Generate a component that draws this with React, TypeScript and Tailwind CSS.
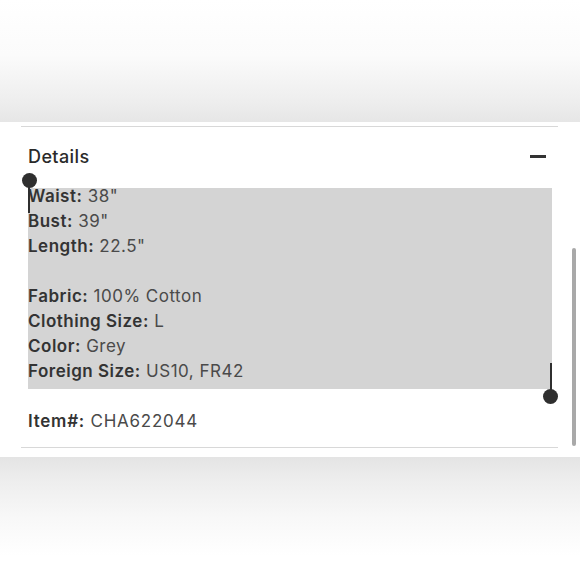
import React from "react";

const rows: ([string, string] | null)[] = [
  ["Waist:", '38"'],
  ["Bust:", '39"'],
  ["Length:", '22.5"'],
  null,
  ["Fabric:", "100% Cotton"],
  ["Clothing Size:", "L"],
  ["Color:", "Grey"],
  ["Foreign Size:", "US10, FR42"],
];

function Handle({ flip }: { flip?: boolean }) {
  return (
    <div className={`flex ${flip ? "flex-col-reverse" : "flex-col"} items-center w-[15px]`}>
      <div className="w-[15px] h-[15px] shrink-0 rounded-full bg-[#2f2f2f]" />
      <div className={`w-[2px] h-[33px] shrink-0 bg-[#2f2f2f] ${flip ? "-mb-[7.5px]" : "-mt-[7.5px]"}`} />
    </div>
  );
}

export default function App() {
  return (
    <div
      className="w-[580px] h-[580px] flex flex-col bg-white overflow-hidden"
      style={{ fontFamily: "Inter, 'Noto Sans', sans-serif" }}
    >
      <div className="h-[122px] shrink-0 bg-[linear-gradient(to_bottom,#ffffff_0%,#fbfbfb_45%,#ededed_85%,#e6e6e6_100%)]" />
      <div className="relative shrink-0 bg-white pt-[4px] pb-[9px]">
        <div className="ml-[21px] w-[537px] h-[1px] bg-[#d8d8d8]" />
        <div className="ml-[21px] w-[537px] pt-[17px] pl-[7px] pr-[12px] flex items-center justify-between">
          <span className="text-[18px] leading-[25px] font-medium tracking-[0.4px] text-[#2a2a2a]">Details</span>
          <span className="block w-[16px] h-[3px] bg-[#333333]" />
        </div>
        <div className="mt-[19px] ml-[28px] w-[524px] h-[201px] bg-[#d4d4d4] flex flex-col">
          <div className="-mt-[4px]">
            {rows.map((r, i) =>
              r ? (
                <div key={i} className="text-[17px] leading-[25px] tracking-[0.5px] text-[#4a4a4a] whitespace-nowrap">
                  <span className="font-semibold text-[#333333]">{r[0]}</span> {r[1]}
                </div>
              ) : (
                <div key={i} className="h-[25px]" />
              )
            )}
          </div>
        </div>
        <div className="mt-[20px] ml-[28px] text-[17px] leading-[25px] tracking-[0.75px] text-[#4a4a4a] whitespace-nowrap">
          <span className="font-semibold text-[#333333]">Item#:</span> CHA622044
        </div>
        <div className="mt-[13px] ml-[21px] w-[537px] h-[1px] bg-[#d8d8d8]" />

        {/* text selection handles (overlay) */}
        <div className="absolute left-[21.5px] top-[50.5px]">
          <Handle />
        </div>
        <div className="absolute left-[543px] top-[241px]">
          <Handle flip />
        </div>

        {/* scrollbar (overlay) */}
        <div className="absolute left-[572px] top-[126px] w-[3.5px] h-[198px] rounded-full bg-[#a9a9a9]" />
      </div>
      <div className="flex-1 bg-[linear-gradient(to_bottom,#e4e4e4_0%,#eeeeee_20%,#f8f8f8_50%,#ffffff_80%)]" />
    </div>
  );
}
